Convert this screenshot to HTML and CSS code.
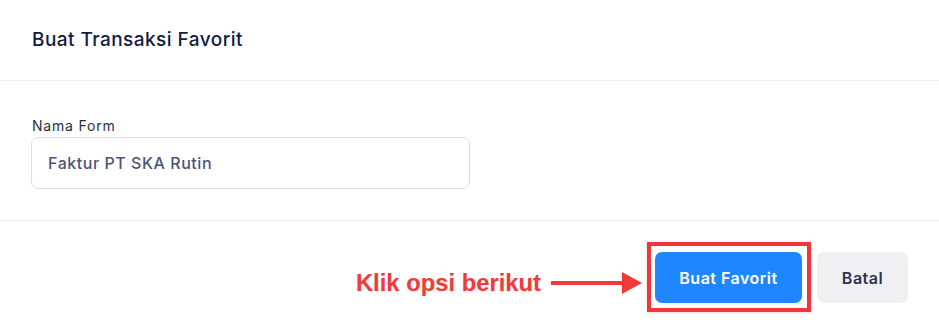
FILE: index.html
```html
<!DOCTYPE html>
<html lang="id">
<head>
<meta charset="utf-8">
<title>Buat Transaksi Favorit</title>
<link rel="stylesheet" href="styles.css">
</head>
<body>
<div class="modal">
  <div class="modal-header">
    <h2 class="title">Buat Transaksi Favorit</h2>
  </div>
  <div class="modal-body">
    <label class="label" for="nama">Nama Form</label>
    <div class="input" id="nama">Faktur PT SKA Rutin</div>
  </div>
  <div class="modal-footer">
    <div class="annotation">
      <span class="annotation-text">Klik opsi berikut</span>
      <svg class="arrow" width="91" height="24" viewBox="0 0 91 24">
        <rect x="0" y="10" width="72" height="4" fill="#f23a3a"/>
        <polygon points="71,1 91,12 71,23" fill="#f23a3a"/>
      </svg>
    </div>
    <div class="highlight-wrap">
      <button class="btn btn-primary">Buat Favorit</button>
      <span class="highlight"></span>
    </div>
    <button class="btn btn-secondary">Batal</button>
  </div>
</div>
</body>
</html>
```
FILE: styles.css
```css
* { box-sizing: border-box; }
html, body {
  margin: 0;
  padding: 0;
  background: #ffffff;
  font-family: Inter, "Noto Sans", sans-serif;
}
.modal {
  width: 939px;
  height: 333px;
  display: flex;
  flex-direction: column;
}
.modal-header {
  height: 81px;
  padding: 28px 32px 0;
  border-bottom: 1px solid #eeeff2;
}
.title {
  margin: 0;
  font-size: 19px;
  line-height: 24px;
  font-weight: 500;
  letter-spacing: 0.45px;
  color: #131c3f;
}
.modal-body {
  height: 140px;
  padding: 35px 32px 0;
  border-bottom: 1px solid #eeeff2;
}
.label {
  display: block;
  font-size: 14px;
  line-height: 20px;
  letter-spacing: 0.8px;
  color: #2b2f3a;
  margin-bottom: 1px;
}
.input {
  width: 439px;
  height: 52px;
  margin-left: -1px;
  border: 1px solid #dcdfea;
  border-radius: 7px;
  padding: 0 16px;
  display: flex;
  align-items: center;
  font-size: 16px;
  font-weight: 500;
  letter-spacing: 0.55px;
  color: #4a5578;
}
.modal-footer {
  flex: 1;
  display: flex;
  justify-content: flex-end;
  align-items: flex-start;
  padding: 31px 31px 0 0;
}
.annotation {
  display: flex;
  align-items: center;
  gap: 10px;
  margin-top: 17px;
  margin-right: 13px;
}
.annotation-text {
  font-family: "Liberation Sans", Arial, sans-serif;
  font-size: 23.8px;
  font-weight: 700;
  color: #f23a3a;
  line-height: 28px;
  text-shadow: 0 1px 2px rgba(0,0,0,0.12);
}
.arrow { display: block; }
.highlight-wrap {
  position: relative;
  margin-right: 15px;
}
.highlight {
  position: absolute;
  top: -10px;
  left: -8px;
  right: -9px;
  bottom: -9px;
  border: 4px solid #f5333a;
  box-shadow: 0 1px 3px rgba(0,0,0,0.15);
  pointer-events: none;
}
.btn {
  height: 51px;
  border: none;
  border-radius: 7px;
  font-family: Inter, "Noto Sans", sans-serif;
  font-size: 16px;
  font-weight: 600;
  letter-spacing: 0.5px;
  display: block;
  padding: 0;
}
.btn-primary {
  width: 147px;
  background: #1e86ff;
  color: #ffffff;
}
.btn-secondary {
  width: 91px;
  background: #f0f0f3;
  color: #2c3452;
}
```
